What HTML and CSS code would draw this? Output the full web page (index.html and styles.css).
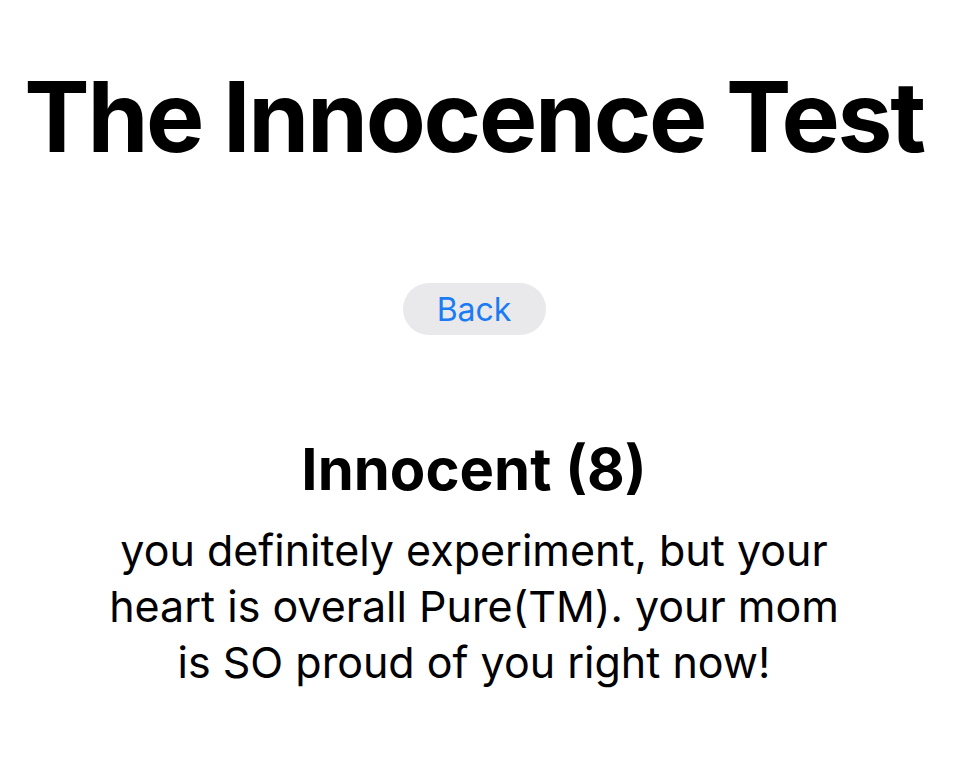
FILE: index.html
```html
<!DOCTYPE html>
<html>
<head>
<meta charset="utf-8">
<link rel="stylesheet" href="styles.css">
</head>
<body>
<main class="page">
  <h1 class="title">The Innocence Test</h1>
  <button class="back">Back</button>
  <section class="result">
    <h2 class="result-title">Innocent (8)</h2>
    <p class="result-text">you definitely experiment, but your heart is overall Pure(TM). your mom is SO proud of you right now!</p>
  </section>
</main>
</body>
</html>
```
FILE: styles.css
```css
html, body {
  margin: 0;
  padding: 0;
  background: #ffffff;
}
body {
  font-family: Inter, "Noto Sans", sans-serif;
  color: #000;
}
.page {
  display: flex;
  flex-direction: column;
  align-items: center;
  padding-top: 62px;
  padding-right: 12px;
}
.title {
  margin: 0;
  font-size: 98px;
  font-weight: 700;
  line-height: 110px;
  letter-spacing: -2.3px;
}
.back {
  margin-top: 111px;
  width: 143px;
  height: 52px;
  border: none;
  border-radius: 26px;
  background: #e9e9eb;
  color: #1a7cf4;
  font-family: Inter, "Noto Sans", sans-serif;
  font-size: 32px;
  padding: 0;
}
.result {
  margin-top: 99px;
  width: 750px;
  text-align: center;
}
.result-title {
  margin: 0;
  font-size: 58px;
  font-weight: 700;
  line-height: 70px;
}
.result-text {
  margin: 18px 0 0;
  font-size: 43px;
  line-height: 56px;
}
```
